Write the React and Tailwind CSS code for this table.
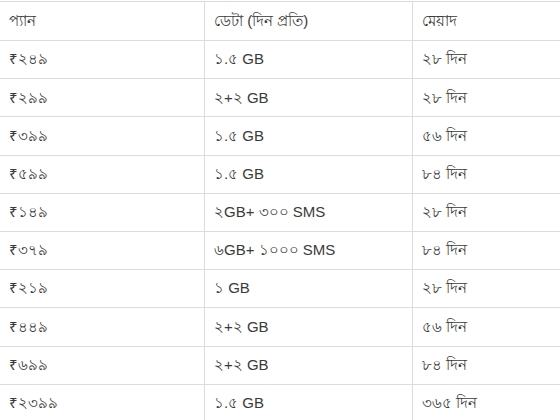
const rows = [
  ["₹২৪৯", "১.৫ GB", "২৮ দিন"],
  ["₹২৯৯", "২+২ GB", "২৮ দিন"],
  ["₹৩৯৯", "১.৫ GB", "৫৬ দিন"],
  ["₹৫৯৯", "১.৫ GB", "৮৪ দিন"],
  ["₹১৪৯", "২GB+ ৩০০ SMS", "২৮ দিন"],
  ["₹৩৭৯", "৬GB+ ১০০০ SMS", "৮৪ দিন"],
  ["₹২১৯", "১ GB", "২৮ দিন"],
  ["₹৪৪৯", "২+২ GB", "৫৬ দিন"],
  ["₹৬৯৯", "২+২ GB", "৮৪ দিন"],
  ["₹২৩৯৯", "১.৫ GB", "৩৬৫ দিন"],
];

function Row({ cells, header }) {
  return (
    <div
      className={
        "grid grid-cols-[205px_208px_211px] border-b border-[#dcdcdc] " +
        (header ? "h-[39px]" : "h-[38.2px]")
      }
    >
      {cells.map((c, i) => (
        <div
          key={i}
          className={
            "flex items-center px-[9px] " +
            (i < 2 ? "border-r border-[#dcdcdc]" : "")
          }
        >
          {c}
        </div>
      ))}
    </div>
  );
}

export default function App() {
  return (
    <div className="w-[560px] h-[420px] overflow-hidden bg-white pt-px">
      <div
        className="w-[624px] border-t border-[#dcdcdc] text-[15px] text-[#3a3a3a]"
        style={{ fontFamily: '"Liberation Sans", "Noto Sans", sans-serif' }}
      >
        <Row header cells={["প্যান", "ডেটা (দিন প্রতি)", "মেয়াদ"]} />
        {rows.map((r, i) => (
          <Row key={i} cells={r} />
        ))}
      </div>
    </div>
  );
}
